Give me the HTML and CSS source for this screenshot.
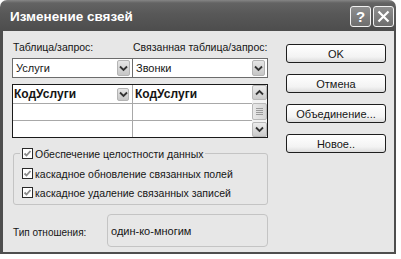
FILE: index.html
```html
<!DOCTYPE html>
<html lang="ru">
<head>
<meta charset="utf-8">
<title>Изменение связей</title>
<link rel="stylesheet" href="styles.css">
</head>
<body>
<div class="dialog">
  <div class="titlebar">
    <span class="title">Изменение связей</span>
    <div class="tb-buttons">
      <span class="tb-btn help">?</span>
      <span class="tb-btn close"><svg width="13" height="13" viewBox="0 0 13 13"><path d="M1.5 1.5 L11.5 11.5 M11.5 1.5 L1.5 11.5" stroke="#fff" stroke-width="2.2" fill="none"/></svg></span>
    </div>
  </div>
  <div class="body">
    <div class="left">
      <div class="labels">
        <span class="lab l1">Таблица/запрос:</span>
        <span class="lab l2">Связанная таблица/запрос:</span>
      </div>
      <div class="combos">
        <div class="combo c1"><span>Услуги</span><span class="arrow"><svg width="9" height="7" viewBox="0 0 9 7"><path d="M1 1.5 L4.5 5 L8 1.5" stroke="#333" stroke-width="1.8" fill="none"/></svg></span></div>
        <div class="combo c2"><span>Звонки</span><span class="arrow"><svg width="9" height="7" viewBox="0 0 9 7"><path d="M1 1.5 L4.5 5 L8 1.5" stroke="#333" stroke-width="1.8" fill="none"/></svg></span></div>
      </div>
      <div class="grid">
        <div class="cols">
          <div class="row h">
            <div class="cell a"><span>КодУслуги</span><span class="arrow small"><svg width="9" height="7" viewBox="0 0 9 7"><path d="M1 1.5 L4.5 5 L8 1.5" stroke="#333" stroke-width="1.8" fill="none"/></svg></span></div>
            <div class="cell b">КодУслуги</div>
          </div>
          <div class="row r2"><div class="cell a"></div><div class="cell b"></div></div>
          <div class="row r3"><div class="cell a"></div><div class="cell b"></div></div>
        </div>
        <div class="vscroll">
          <span class="sbtn"><svg width="9" height="7" viewBox="0 0 9 7"><path d="M1 5.5 L4.5 2 L8 5.5" stroke="#333" stroke-width="1.8" fill="none"/></svg></span>
          <span class="thumb"><i></i><i></i><i></i><i></i></span>
          <span class="sbtn"><svg width="9" height="7" viewBox="0 0 9 7"><path d="M1 1.5 L4.5 5 L8 1.5" stroke="#333" stroke-width="1.8" fill="none"/></svg></span>
        </div>
      </div>
      <fieldset class="group">
        <legend><span class="chk lg"><span class="box"><svg width="9" height="9" viewBox="0 0 9 9"><path d="M1.5 4.5 L3.5 6.5 L7.5 2" stroke="#8a8a8a" stroke-width="1.8" fill="none"/></svg></span><span>Обеспечение целостности данных</span></span></legend>
        <div class="chk"><span class="box"><svg width="9" height="9" viewBox="0 0 9 9"><path d="M1.5 4.5 L3.5 6.5 L7.5 2" stroke="#8a8a8a" stroke-width="1.8" fill="none"/></svg></span><span>каскадное обновление связанных полей</span></div>
        <div class="chk"><span class="box"><svg width="9" height="9" viewBox="0 0 9 9"><path d="M1.5 4.5 L3.5 6.5 L7.5 2" stroke="#8a8a8a" stroke-width="1.8" fill="none"/></svg></span><span>каскадное удаление связанных записей</span></div>
      </fieldset>
      <div class="reltype">
        <span class="rt-label">Тип отношения:</span>
        <div class="rt-box">один-ко-многим</div>
      </div>
    </div>
    <div class="right">
      <div class="btn">OK</div>
      <div class="btn">Отмена</div>
      <div class="btn">Объединение...</div>
      <div class="btn">Новое..</div>
    </div>
  </div>
</div>
</body>
</html>
```
FILE: styles.css
```css
* { box-sizing: border-box; margin: 0; padding: 0; }
html, body { background: #fff; }
body {
  font-family: "Liberation Sans", Arial, sans-serif;
  font-size: 10.5px;
  color: #151515;
}
.dialog {
  width: 396px;
  display: flex;
  flex-direction: column;
}
.titlebar {
  height: 31px;
  display: flex;
  justify-content: space-between;
  align-items: center;
  padding: 0 2px 0 10px;
  border-radius: 7px 7px 0 0;
  background: linear-gradient(#858585 0, #636363 3px, #585858 45%, #4d4d4d 100%);
}
.title {
  color: #fff;
  font-weight: bold;
  font-size: 13.5px;
  padding-top: 1px;
}
.tb-buttons {
  display: flex;
  gap: 2px;
  align-self: flex-start;
  margin-top: 6px;
}
.tb-btn {
  width: 21px;
  height: 21px;
  border: 1px solid #f2f2f2;
  border-radius: 3px;
  background: linear-gradient(#8e8e8e, #6e6e6e);
  display: flex;
  align-items: center;
  justify-content: center;
  color: #fff;
  font-weight: bold;
  font-size: 15px;
}
.body {
  height: 223px;
  background: #e7e7e7;
  border: solid #4e4e4e;
  border-width: 0 2px 2px 3px;
  display: flex;
  padding: 10px 0 0 9px;
}
.left {
  width: 256px;
  display: flex;
  flex-direction: column;
}
.labels {
  display: flex;
  height: 13px;
  line-height: 13px;
  white-space: nowrap;
}
.l1 { width: 121px; flex: none; padding-left: 1px; }
.combos {
  display: flex;
  margin-top: 4px;
  height: 20px;
}
.combo {
  height: 20px;
  border: 1px solid #6c6c6c;
  background: #fff;
  display: flex;
  align-items: center;
  justify-content: space-between;
  padding: 0 2px 0 3px;
  font-size: 11px;
}
.c1 { width: 121px; }
.c2 { flex: 1; margin-left: -1px; }
.arrow {
  width: 13px;
  height: 16px;
  border: 1px solid #b4b4b4;
  border-radius: 2px;
  background: linear-gradient(#e6e6e6, #c6c6c6);
  display: flex;
  align-items: center;
  justify-content: center;
}
.arrow.small { width: 12px; height: 13px; }
.grid {
  margin-top: 6px;
  height: 54px;
  border: 1px solid #1a1a1a;
  background: #fff;
  display: flex;
}
.cols {
  flex: 1;
  display: flex;
  flex-direction: column;
}
.row {
  display: flex;
  border-bottom: 1px solid #a8a8a8;
}
.row.h {
  height: 19px;
  font-weight: bold;
  font-size: 12px;
}
.row.r2 { height: 17px; }
.row.r3 { flex: 1; border-bottom: 0; }
.cell {
  display: flex;
  align-items: center;
}
.cell.a {
  width: 120px;
  border-right: 1px solid #a8a8a8;
  justify-content: space-between;
  padding: 0 3px 0 1px;
}
.cell.b { flex: 1; padding-left: 2px; }
.vscroll {
  width: 15px;
  display: flex;
  flex-direction: column;
  justify-content: space-between;
  background: #f3f3f3;
}
.sbtn {
  height: 15px;
  border: 1px solid #b8b8b8;
  border-radius: 2px;
  background: linear-gradient(#ececec, #cbcbcb);
  display: flex;
  align-items: center;
  justify-content: center;
}
.thumb {
  height: 17px;
  border: 1px solid #b8b8b8;
  border-radius: 2px;
  background: linear-gradient(90deg, #e8e8e8, #d6d6d6);
  display: flex;
  flex-direction: column;
  justify-content: center;
  align-items: center;
  gap: 1px;
}
.thumb i {
  display: block;
  width: 7px;
  height: 1px;
  background: #9a9a9a;
}
.group {
  margin: 9px 0 0 1px;
  width: 255px;
  border: 1px solid #c4c4c4;
  border-radius: 3px;
  padding: 4px 6px 2px 6px;
}
.group legend {
  padding: 0 2px;
  height: 13px;
}
.chk {
  display: flex;
  align-items: center;
  gap: 2px;
  height: 19px;
  padding-left: 2px;
  white-space: nowrap;
}
.chk.lg { height: 13px; padding-left: 0; }
.box {
  width: 11px;
  height: 11px;
  flex: none;
  border: 1px solid #2a2a2a;
  background: #fff;
  display: flex;
  align-items: center;
  justify-content: center;
}
.reltype {
  margin-top: 9px;
  display: flex;
  align-items: center;
}
.rt-label {
  width: 95px;
  flex: none;
  padding: 3px 0 0 1px;
  font-size: 10px;
}
.rt-box {
  width: 161px;
  height: 33px;
  border: 1px solid #c4c4c4;
  border-radius: 4px;
  display: flex;
  align-items: center;
  padding-left: 3px;
  font-size: 11px;
}
.right {
  width: 100px;
  margin: 3px 0 0 18px;
  display: flex;
  flex-direction: column;
  gap: 11px;
}
.btn {
  height: 19px;
  border: 1px solid #1e1e1e;
  border-radius: 3px;
  background: linear-gradient(#fff, #f3f3f3 70%, #dcdcdc);
  display: flex;
  align-items: center;
  justify-content: center;
  font-size: 11px;
}
```
